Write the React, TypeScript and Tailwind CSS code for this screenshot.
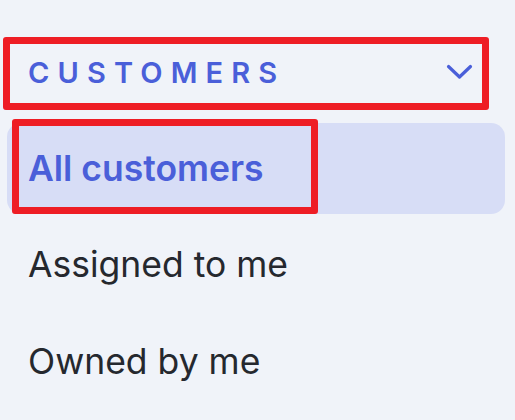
const items = ['Assigned to me', 'Owned by me'];

// Chevron for the section header
const Chevron = () => (
  <svg width="27" height="16" viewBox="0 0 27 16" fill="none" className="text-[#4a5fd9]">
    <polyline
      points="2.5,2.5 13.5,13 24.5,2.5"
      stroke="currentColor"
      strokeWidth="3.2"
      strokeLinecap="round"
      strokeLinejoin="round"
    />
  </svg>
);

export default function App() {
  return (
    <div className="relative min-h-screen bg-[#f0f3f9] font-['Inter',sans-serif]">
      <div className="flex flex-col pl-[7px] pr-[10px] pt-[37px]">
        <button className="flex h-[73px] items-center justify-between pb-[3px] pl-[21px] pr-[32px]">
          <span className="text-[29px] font-semibold uppercase leading-none tracking-[0.28em] text-[#4a5fd9]">
            Customers
          </span>
          <Chevron />
        </button>

        <div className="mt-[13px] flex flex-col gap-[5.5px]">
          <div className="flex h-[91px] items-center rounded-[14px] bg-[#d7ddf6] pl-[21px]">
            <span className="text-[35.5px] font-semibold leading-none text-[#4a5fd9]">All customers</span>
          </div>
          {items.map((label) => (
            <div key={label} className="flex h-[91px] items-center pl-[21px]">
              <span className="text-[35.5px] leading-none text-[#25282e]">{label}</span>
            </div>
          ))}
        </div>
      </div>

      {/* annotation outlines */}
      <div className="pointer-events-none absolute left-[3px] top-[37px] h-[73px] w-[486px] rounded-[3px] border-[7px] border-[#ee1d25]" />
      <div className="pointer-events-none absolute left-[12px] top-[119px] h-[95px] w-[306px] rounded-[3px] border-[7px] border-[#ee1d25]" />
    </div>
  );
}
